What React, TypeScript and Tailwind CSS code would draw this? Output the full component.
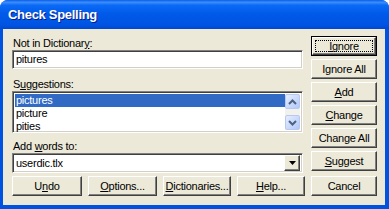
import React from 'react';

const raised =
  'border border-t-white border-l-white border-r-[#404040] border-b-[#404040] shadow-[inset_-1px_-1px_0_#808080]';
const sunken =
  'border border-t-[#808080] border-l-[#808080] border-r-white border-b-white shadow-[inset_1px_1px_0_#404040,inset_-1px_-1px_0_#d4d0c8]';

function Btn({ children, w = '', def = false }: { children: React.ReactNode; w?: string; def?: boolean }) {
  if (def) {
    return (
      <div className={`h-[20px] border border-black bg-[#ece9d8] ${w}`}>
        <div className={`flex h-full w-full items-center justify-center p-[2px] ${raised}`}>
          <div className="flex h-full w-full items-center justify-center border border-dotted border-black">
            {children}
          </div>
        </div>
      </div>
    );
  }
  return (
    <div className={`flex h-[20px] items-center justify-center bg-[#ece9d8] ${raised} ${w}`}>
      {children}
    </div>
  );
}

const U = ({ children }: { children: React.ReactNode }) => (
  <span className="underline decoration-1 underline-offset-[1px]">{children}</span>
);

function ScrollArrow({ up }: { up?: boolean }) {
  return (
    <div className="flex h-[15px] w-[15px] items-center justify-center rounded-[2px] border border-[#b6c9f5] bg-[linear-gradient(135deg,#e6eefe_0%,#c6d7fb_60%,#b3c8f6_100%)]">
      <svg width="9" height="6" viewBox="0 0 9 6">
        <path d={up ? 'M1 5 L4.5 1.5 L8 5' : 'M1 1 L4.5 4.5 L8 1'} fill="none" stroke="#4d6185" strokeWidth="2" />
      </svg>
    </div>
  );
}

export default function App() {
  return (
    <div className="h-[209px] w-[389px] bg-white font-['Liberation_Sans',Arial,sans-serif] text-[11px] tracking-[-0.25px] text-black">
      <div className="flex h-full flex-col overflow-hidden rounded-t-[8px] bg-[#0052e0]">
        <div className="flex h-[29px] items-center px-[8px] pt-[1px] bg-[linear-gradient(180deg,#0a5fe8_0%,#3d8dfb_8%,#0a6af6_18%,#0059e8_50%,#0054e3_85%,#0048d2_100%)]">
          <span className="text-[13px] font-bold tracking-[-0.3px] text-white [text-shadow:1px_1px_0_#0a1d8a]">
            Check Spelling
          </span>
        </div>
        <div className="flex flex-1 pl-[3px] pr-[4px] pb-[4px]">
          <div className="flex flex-1 flex-col bg-[#ece9d8] pl-[9px] pr-[8px] pt-[7px]">
            <div className="flex gap-[8px]">
              <div className="flex w-[291px] flex-col">
                <div className="h-[14px] leading-[14px] pl-[1px]">
                  Not in Dictionar<U>y</U>:
                </div>
                <div className={`flex h-[19px] items-center bg-white pl-[3px] ${sunken}`}>pitures</div>
                <div className="mt-[8px] h-[14px] leading-[14px] pl-[1px]">
                  S<U>u</U>ggestions:
                </div>
                <div className={`flex h-[42px] bg-white ${sunken} p-[2px]`}>
                  <div className="flex flex-1 flex-col">
                    <div className="h-[13px] bg-[#316ac5] pl-[1px] leading-[13px] text-white">pictures</div>
                    <div className="h-[13px] pl-[1px] leading-[13px]">picture</div>
                    <div className="h-[13px] pl-[1px] leading-[13px]">pities</div>
                  </div>
                  <div className="flex w-[15px] flex-col justify-between bg-[#f3f1ec]">
                    <ScrollArrow up />
                    <ScrollArrow />
                  </div>
                </div>
                <div className="mt-[6px] h-[14px] leading-[14px] pl-[1px]">
                  Add <U>w</U>ords to:
                </div>
                <div className={`flex h-[20px] items-center bg-white pl-[3px] pr-[2px] ${sunken}`}>
                  <span className="flex-1">userdic.tlx</span>
                  <div className={`flex h-[16px] w-[16px] items-center justify-center bg-[#ece9d8] ${raised}`}>
                    <svg width="7" height="4" viewBox="0 0 7 4">
                      <path d="M0 0 H7 L3.5 4 Z" fill="#000" />
                    </svg>
                  </div>
                </div>
              </div>
              <div className="flex w-[66px] flex-col gap-[3px]">
                <Btn def>
                  <U>I</U>gnore
                </Btn>
                <Btn>Ignore All</Btn>
                <Btn>
                  <U>A</U>dd
                </Btn>
                <Btn>
                  <U>C</U>hange
                </Btn>
                <Btn>Change All</Btn>
                <Btn>
                  <U>S</U>uggest
                </Btn>
              </div>
            </div>
            <div className="mt-[3px] flex gap-[6px]">
              <Btn w="w-[70px]">
                U<U>n</U>do
              </Btn>
              <Btn w="w-[69px]">
                <U>O</U>ptions...
              </Btn>
              <Btn w="w-[68px]">
                <U>D</U>ictionaries...
              </Btn>
              <Btn w="w-[68px]">
                <U>H</U>elp...
              </Btn>
              <Btn w="w-[66px]">Cancel</Btn>
            </div>
          </div>
        </div>
      </div>
    </div>
  );
}
